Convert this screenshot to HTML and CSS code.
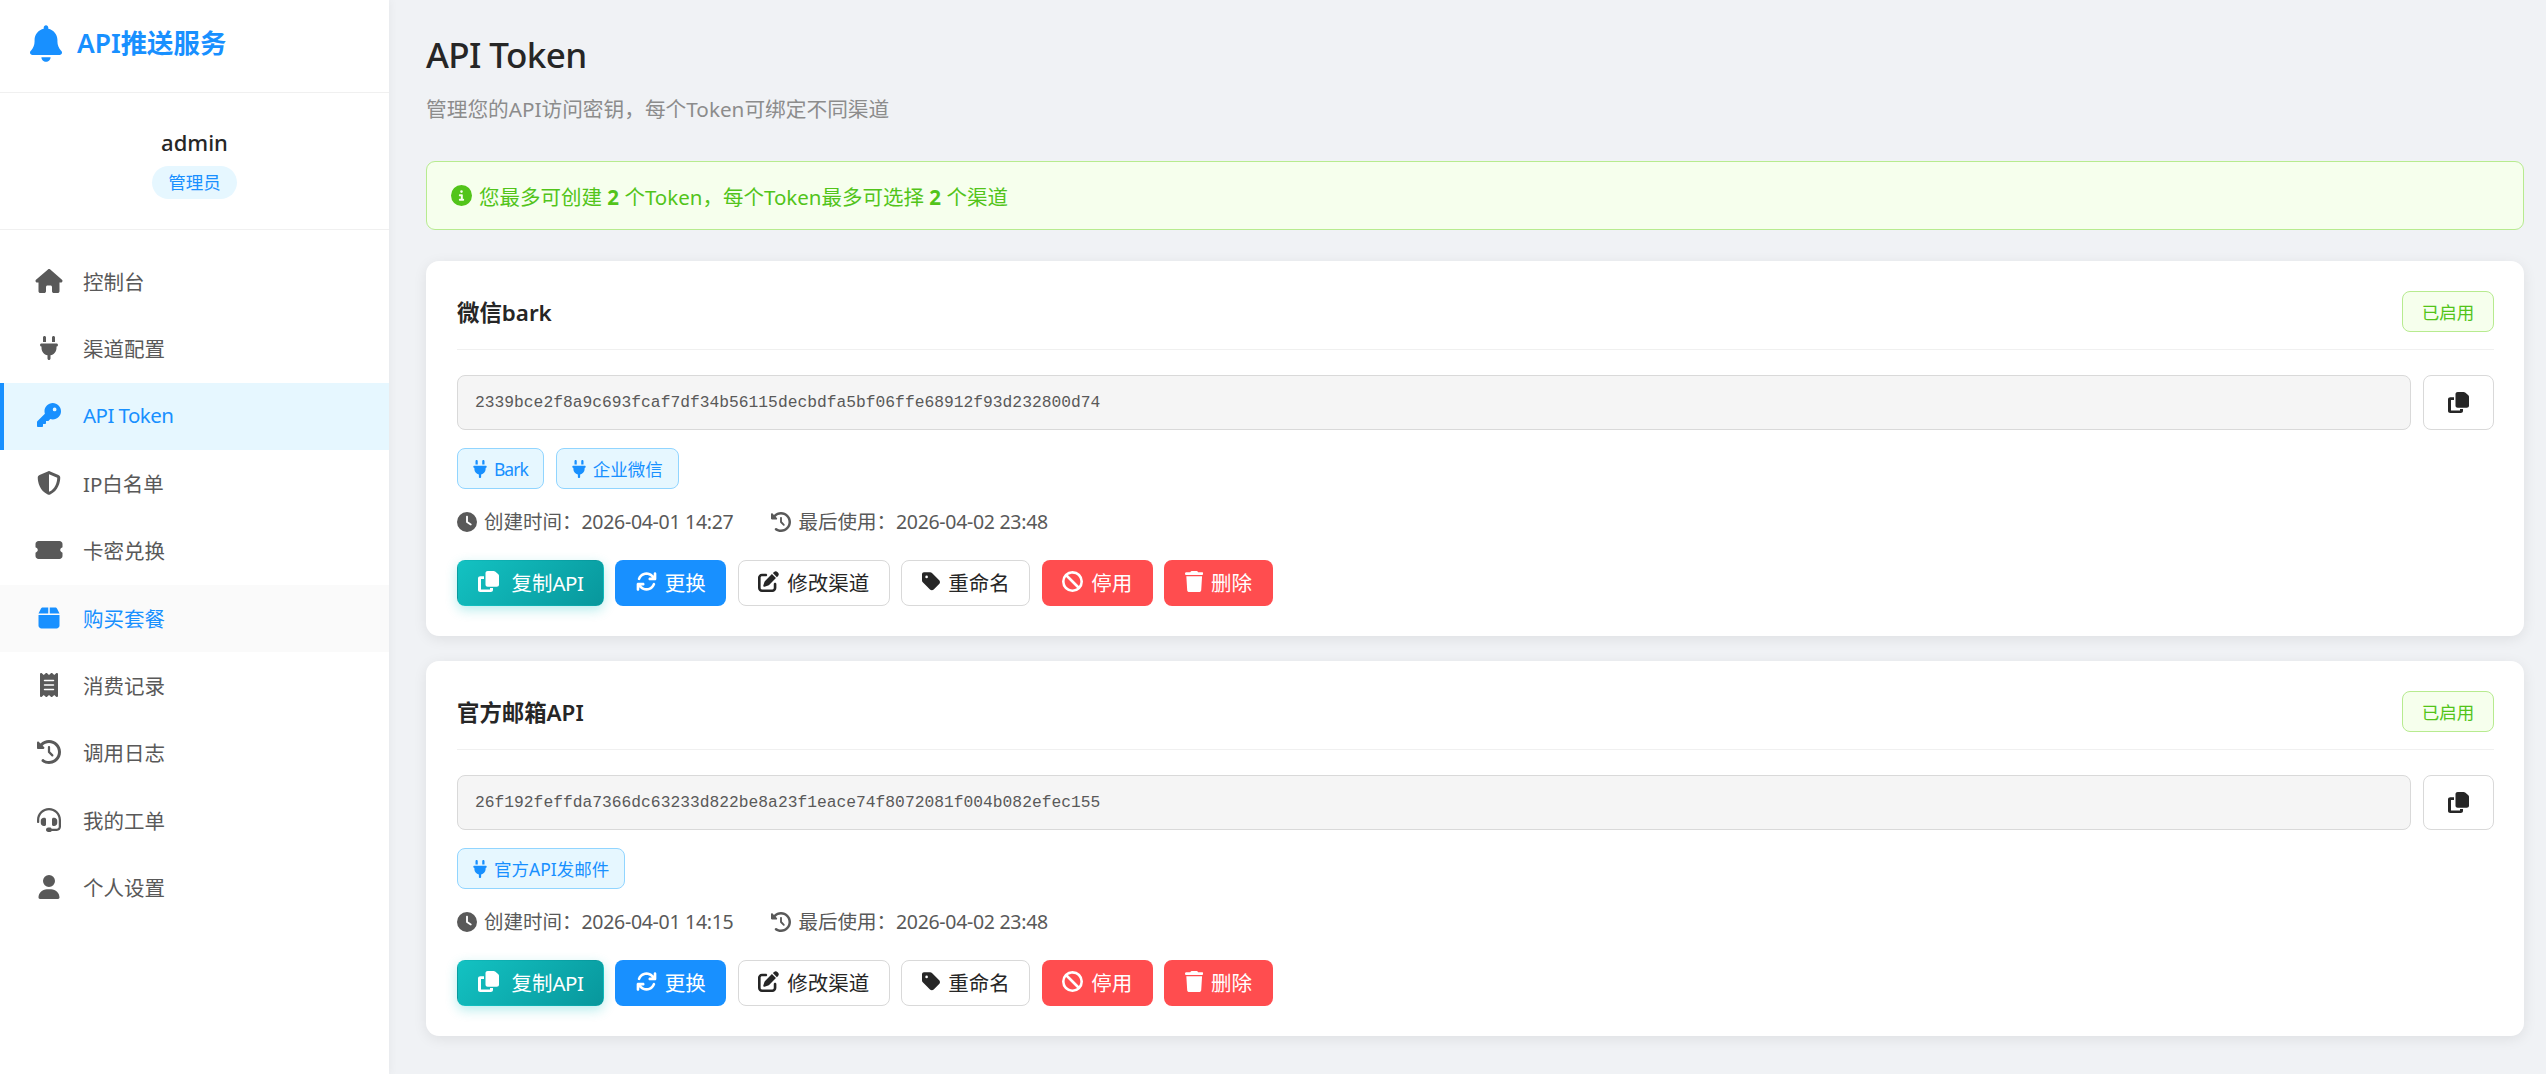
FILE: index.html
```html
<!DOCTYPE html>
<html lang="zh-CN">
<head>
<meta charset="utf-8">
<title>API Token</title>
<link rel="stylesheet" href="styles.css">
</head>
<body>
<svg class="defs" aria-hidden="true">
  <symbol id="i-bell" viewBox="0 0 448 512"><path d="M224 0c-17.7 0-32 14.3-32 32V51.2C119 66 64 130.6 64 208v18.8c0 47-17.3 92.4-48.5 127.6l-7.4 8.3c-8.4 9.4-10.4 22.9-5.3 34.4S19.4 416 32 416H416c12.6 0 24-7.4 29.2-18.9s3.1-25-5.3-34.4l-7.4-8.3C401.3 319.2 384 273.9 384 226.8V208c0-77.4-55-142-128-156.8V32c0-17.7-14.3-32-32-32zm45.3 493.3c12-12 18.7-28.3 18.7-45.3H224 160c0 17 6.7 33.3 18.7 45.3s28.3 18.7 45.3 18.7s33.3-6.7 45.3-18.7z"/></symbol>
  <symbol id="i-home" viewBox="0 0 576 512"><path d="M575.8 255.5c0 18-15 32.1-32 32.1h-32l.7 160.2c0 2.7-.2 5.4-.5 8.1V472c0 22.1-17.9 40-40 40H456c-1.1 0-2.2 0-3.3-.1c-1.4 .1-2.8 .1-4.2 .1H416 392c-22.1 0-40-17.9-40-40V448 384c0-17.7-14.3-32-32-32H256c-17.7 0-32 14.3-32 32v64 24c0 22.1-17.9 40-40 40H160 128.1c-1.5 0-3-.1-4.5-.2c-1.2 .1-2.4 .2-3.6 .2H104c-22.1 0-40-17.9-40-40V360c0-.9 0-1.9 .1-2.8V287.6H32c-18 0-32-14-32-32.1c0-9 3-17 10-24L266.4 8c7-7 15-8 22-8s15 2 21 7L564.8 231.5c8 7 12 15 11 24z"/></symbol>
  <symbol id="i-plug" viewBox="0 0 384 512"><path d="M96 0C78.3 0 64 14.3 64 32v96h64V32c0-17.7-14.3-32-32-32zM288 0c-17.7 0-32 14.3-32 32v96h64V32c0-17.7-14.3-32-32-32zM32 160c-17.7 0-32 14.3-32 32s14.3 32 32 32v32c0 77.4 55 142 128 156.8V480c0 17.7 14.3 32 32 32s32-14.3 32-32V412.8C297 398 352 333.4 352 256V224c17.7 0 32-14.3 32-32s-14.3-32-32-32H32z"/></symbol>
  <symbol id="i-key" viewBox="0 0 512 512"><path d="M336 352c97.2 0 176-78.8 176-176S433.2 0 336 0S160 78.8 160 176c0 18.7 2.9 36.8 8.3 53.7L7 391c-4.5 4.5-7 10.6-7 17v80c0 13.3 10.7 24 24 24h80c13.3 0 24-10.7 24-24V448h40c13.3 0 24-10.7 24-24V384h40c6.4 0 12.5-2.5 17-7l33.3-33.3c16.9 5.4 35 8.3 53.7 8.3zM376 96a40 40 0 1 1 0 80 40 40 0 1 1 0-80z"/></symbol>
  <symbol id="i-shield" viewBox="0 0 512 512"><path d="M256 0c4.6 0 9.2 1 13.4 2.9L457.7 82.8c22 9.3 38.4 31 38.3 57.2c-.5 99.2-41.3 280.7-213.6 363.2c-16.7 8-36.1 8-52.8 0C57.3 420.7 16.5 239.2 16 140c-.1-26.2 16.3-47.9 38.3-57.2L242.7 2.9C246.8 1 251.4 0 256 0zm0 66.8V444.8C394 378 431.1 230.1 432 141.4L256 66.8l0 0z"/></symbol>
  <symbol id="i-ticket" viewBox="0 0 576 512"><path d="M0 128C0 92.7 28.7 64 64 64H512c35.3 0 64 28.7 64 64v64c0 8.8-7.4 15.7-15.7 18.6C541.5 217.1 528 235 528 256s13.5 38.9 32.3 45.4c8.3 2.9 15.7 9.8 15.7 18.6v64c0 35.3-28.7 64-64 64H64c-35.3 0-64-28.7-64-64V320c0-8.8 7.4-15.7 15.7-18.6C34.5 294.9 48 277 48 256s-13.5-38.9-32.3-45.4C7.4 207.7 0 200.8 0 192V128z"/></symbol>
  <symbol id="i-box" viewBox="0 0 448 512"><path d="M50.7 58.5L0 160H208V32H93.7C75.5 32 58.9 42.3 50.7 58.5zM240 160H448L397.3 58.5C389.1 42.3 372.5 32 354.3 32H240V160zm208 32H0V416c0 35.3 28.7 64 64 64H384c35.3 0 64-28.7 64-64V192z"/></symbol>
  <symbol id="i-receipt" viewBox="0 0 384 512"><path d="M14 2.2C22.5-1.7 32.5-.3 39.6 5.8L80 40.4 120.4 5.8c9-7.7 22.3-7.7 31.2 0L192 40.4 232.4 5.8c9-7.7 22.3-7.7 31.2 0L304 40.4 344.4 5.8c7.1-6.1 17.1-7.5 25.6-3.6s14 12.4 14 21.8V488c0 9.4-5.5 17.9-14 21.8s-18.5 2.5-25.6-3.6L304 471.6l-40.4 34.6c-9 7.7-22.3 7.7-31.2 0L192 471.6l-40.4 34.6c-9 7.7-22.3 7.7-31.2 0L80 471.6 39.6 506.2c-7.1 6.1-17.1 7.5-25.6 3.6S0 497.4 0 488V24C0 14.6 5.5 6.1 14 2.2zM96 144c-8.8 0-16 7.2-16 16s7.2 16 16 16H288c8.8 0 16-7.2 16-16s-7.2-16-16-16H96zM80 352c0 8.8 7.2 16 16 16H288c8.8 0 16-7.2 16-16s-7.2-16-16-16H96c-8.8 0-16 7.2-16 16zM96 240c-8.8 0-16 7.2-16 16s7.2 16 16 16H288c8.8 0 16-7.2 16-16s-7.2-16-16-16H96z"/></symbol>
  <symbol id="i-history" viewBox="0 0 512 512"><path d="M75 75L41 41C25.9 25.9 0 36.6 0 57.9V168c0 13.3 10.7 24 24 24H134.1c21.4 0 32.1-25.9 17-41l-30.8-30.8C155 85.5 203 64 256 64c106 0 192 86 192 192s-86 192-192 192c-40.8 0-78.6-12.7-109.7-34.4c-14.5-10.1-34.4-6.6-44.6 7.9s-6.6 34.4 7.9 44.6C151.2 495 201.7 512 256 512c141.4 0 256-114.6 256-256S397.4 0 256 0C185.3 0 121.3 28.7 75 75zm181 53c-13.3 0-24 10.7-24 24V256c0 6.4 2.5 12.5 7 17l72 72c9.4 9.4 24.6 9.4 33.9 0s9.4-24.6 0-33.9l-65-65V152c0-13.3-10.7-24-24-24z"/></symbol>
  <symbol id="i-headset" viewBox="0 0 512 512"><path d="M256 48C141.1 48 48 141.1 48 256v40c0 13.3-10.7 24-24 24s-24-10.7-24-24V256C0 114.6 114.6 0 256 0S512 114.6 512 256V400.1c0 48.6-39.4 88-88.1 88L313.6 488c-8.3 14.3-23.8 24-41.6 24H240c-26.5 0-48-21.5-48-48s21.5-48 48-48h32c17.8 0 33.3 9.7 41.6 24l110.4 .1c22.1 0 40-17.9 40-40V256c0-114.9-93.1-208-208-208zM144 208h16c17.7 0 32 14.3 32 32V352c0 17.7-14.3 32-32 32H144c-35.3 0-64-28.7-64-64V272c0-35.3 28.7-64 64-64zm224 0c35.3 0 64 28.7 64 64v48c0 35.3-28.7 64-64 64H352c-17.7 0-32-14.3-32-32V240c0-17.7 14.3-32 32-32h16z"/></symbol>
  <symbol id="i-user" viewBox="0 0 448 512"><path d="M224 256A128 128 0 1 0 224 0a128 128 0 1 0 0 256zm-45.7 48C79.8 304 0 383.8 0 482.3C0 498.7 13.3 512 29.7 512H418.3c16.4 0 29.7-13.3 29.7-29.7C448 383.8 368.2 304 269.7 304H178.3z"/></symbol>
  <symbol id="i-info" viewBox="0 0 512 512"><path d="M256 512A256 256 0 1 0 256 0a256 256 0 1 0 0 512zM216 336h24V272H216c-13.3 0-24-10.7-24-24s10.7-24 24-24h48c13.3 0 24 10.7 24 24v88h8c13.3 0 24 10.7 24 24s-10.7 24-24 24H216c-13.3 0-24-10.7-24-24s10.7-24 24-24zm40-208a32 32 0 1 1 0 64 32 32 0 1 1 0-64z"/></symbol>
  <symbol id="i-clock" viewBox="0 0 512 512"><path d="M256 0a256 256 0 1 1 0 512A256 256 0 1 1 256 0zM232 120V256c0 8 4 15.5 10.7 20l96 64c11 7.4 25.9 4.4 33.3-6.7s4.4-25.9-6.7-33.3L280 243.2V120c0-13.3-10.7-24-24-24s-24 10.7-24 24z"/></symbol>
  <symbol id="i-copy" viewBox="0 0 448 512" preserveAspectRatio="none"><path d="M208 0H332.1c12.7 0 24.9 5.1 33.9 14.1l67.9 67.9c9 9 14.1 21.2 14.1 33.9V336c0 26.5-21.5 48-48 48H208c-26.5 0-48-21.5-48-48V48c0-26.5 21.5-48 48-48zM48 128h80v64H64V448H256V416h64v48c0 26.5-21.5 48-48 48H48c-26.5 0-48-21.5-48-48V176c0-26.5 21.5-48 48-48z"/></symbol>
  <symbol id="i-sync" viewBox="0 0 512 512"><path d="M105.1 202.6c7.7-21.8 20.2-42.3 37.8-59.8c62.5-62.5 163.8-62.5 226.3 0L386.3 160H336c-17.7 0-32 14.3-32 32s14.3 32 32 32H463.5c0 0 0 0 0 0h.4c17.7 0 32-14.3 32-32V64c0-17.7-14.3-32-32-32s-32 14.3-32 32v51.2L414.4 97.6c-87.5-87.5-229.3-87.5-316.8 0C73.2 122 55.6 150.7 44.8 181.4c-5.9 16.7 2.9 34.9 19.5 40.8s34.9-2.9 40.8-19.5zM39 289.3c-5 1.5-9.8 4.2-13.7 8.2c-4 4-6.7 8.8-8.1 14c-.3 1.2-.6 2.5-.8 3.8c-.3 1.7-.4 3.4-.4 5.1V448c0 17.7 14.3 32 32 32s32-14.3 32-32V396.9l17.6 17.5 0 0c87.5 87.4 229.3 87.4 316.7 0c24.4-24.4 42.1-53.1 52.9-83.7c5.9-16.7-2.9-34.9-19.5-40.8s-34.9 2.9-40.8 19.5c-7.7 21.8-20.2 42.3-37.8 59.8c-62.5 62.5-163.8 62.5-226.3 0l-.1-.1L125.6 352H176c17.7 0 32-14.3 32-32s-14.3-32-32-32H48.4c-1.6 0-3.2 .1-4.8 .3s-3.1 .5-4.6 1z"/></symbol>
  <symbol id="i-edit" viewBox="0 0 512 512"><path d="M471.6 21.7c-21.9-21.9-57.3-21.9-79.2 0L362.3 51.7l97.9 97.9 30.1-30.1c21.9-21.9 21.9-57.3 0-79.2L471.6 21.7zm-299.2 220c-6.1 6.1-10.8 13.6-13.5 21.9l-29.6 88.8c-2.9 8.6-.6 18.1 5.8 24.6s15.9 8.7 24.6 5.8l88.8-29.6c8.2-2.7 15.7-7.4 21.9-13.5L437.7 172.3 339.7 74.3 172.4 241.7zM96 64C43 64 0 107 0 160V416c0 53 43 96 96 96H352c53 0 96-43 96-96V320c0-17.7-14.3-32-32-32s-32 14.3-32 32v96c0 17.7-14.3 32-32 32H96c-17.7 0-32-14.3-32-32V160c0-17.7 14.3-32 32-32h96c17.7 0 32-14.3 32-32s-14.3-32-32-32H96z"/></symbol>
  <symbol id="i-tag" viewBox="0 0 448 512"><path d="M0 80V229.5c0 17 6.7 33.3 18.7 45.3l176 176c25 25 65.5 25 90.5 0L418.7 317.3c25-25 25-65.5 0-90.5l-176-176c-12-12-28.3-18.7-45.3-18.7H48C21.5 32 0 53.5 0 80zm112 32a32 32 0 1 1 0 64 32 32 0 1 1 0-64z"/></symbol>
  <symbol id="i-ban" viewBox="0 0 512 512"><path d="M367.2 412.5L99.5 144.8C77.1 176.1 64 214.5 64 256c0 106 86 192 192 192c41.5 0 79.9-13.1 111.2-35.5zm45.3-45.3C434.9 335.9 448 297.5 448 256c0-106-86-192-192-192c-41.5 0-79.9 13.1-111.2 35.5L412.5 367.2zM0 256a256 256 0 1 1 512 0A256 256 0 1 1 0 256z"/></symbol>
  <symbol id="i-trash" viewBox="0 0 448 512"><path d="M135.2 17.7L128 32H32C14.3 32 0 46.3 0 64S14.3 96 32 96H416c17.7 0 32-14.3 32-32s-14.3-32-32-32H320l-7.2-14.3C307.4 6.8 296.3 0 284.2 0H163.8c-12.1 0-23.2 6.8-28.6 17.7zM416 128H32L53.2 467c1.6 25.3 22.6 45 47.9 45H346.9c25.3 0 46.3-19.7 47.9-45L416 128z"/></symbol>
</svg>

<div class="app">
  <aside class="sidebar">
    <div class="brand">
      <svg class="brand-icon"><use href="#i-bell"/></svg>
      <span class="brand-name">API推送服务</span>
    </div>
    <div class="user">
      <div class="user-name">admin</div>
      <span class="user-role">管理员</span>
    </div>
    <nav class="nav">
      <a class="nav-item"><svg class="nav-icon"><use href="#i-home"/></svg><span>控制台</span></a>
      <a class="nav-item"><svg class="nav-icon"><use href="#i-plug"/></svg><span>渠道配置</span></a>
      <a class="nav-item is-active"><svg class="nav-icon"><use href="#i-key"/></svg><span class="lat">API Token</span></a>
      <a class="nav-item"><svg class="nav-icon"><use href="#i-shield"/></svg><span>IP白名单</span></a>
      <a class="nav-item"><svg class="nav-icon"><use href="#i-ticket"/></svg><span>卡密兑换</span></a>
      <a class="nav-item is-hover"><svg class="nav-icon"><use href="#i-box"/></svg><span>购买套餐</span></a>
      <a class="nav-item"><svg class="nav-icon"><use href="#i-receipt"/></svg><span>消费记录</span></a>
      <a class="nav-item"><svg class="nav-icon"><use href="#i-history"/></svg><span>调用日志</span></a>
      <a class="nav-item"><svg class="nav-icon"><use href="#i-headset"/></svg><span>我的工单</span></a>
      <a class="nav-item"><svg class="nav-icon"><use href="#i-user"/></svg><span>个人设置</span></a>
    </nav>
  </aside>

  <main class="main">
    <h1 class="page-title">API Token</h1>
    <p class="page-sub">管理您的API访问密钥，每个Token可绑定不同渠道</p>

    <div class="alert">
      <svg class="alert-icon"><use href="#i-info"/></svg>
      <span>您最多可创建 <strong>2</strong> 个Token，每个Token最多可选择 <strong>2</strong> 个渠道</span>
    </div>

    <section class="card">
      <header class="card-head">
        <h2 class="card-title">微信bark</h2>
        <span class="status">已启用</span>
      </header>
      <div class="token-row">
        <div class="token">2339bce2f8a9c693fcaf7df34b56115decbdfa5bf06ffe68912f93d232800d74</div>
        <button class="copy-btn"><svg class="btn-icon"><use href="#i-copy"/></svg></button>
      </div>
      <div class="tags">
        <span class="tag"><svg class="tag-icon"><use href="#i-plug"/></svg><span class="lat">Bark</span></span>
        <span class="tag"><svg class="tag-icon"><use href="#i-plug"/></svg>企业微信</span>
      </div>
      <div class="meta">
        <span class="meta-item"><svg class="meta-icon"><use href="#i-clock"/></svg><span>创建时间：<span class="date">2026-04-01 14:27</span></span></span>
        <span class="meta-item"><svg class="meta-icon"><use href="#i-history"/></svg><span>最后使用：<span class="date">2026-04-02 23:48</span></span></span>
      </div>
      <div class="actions">
        <button class="btn btn-teal"><svg class="btn-icon"><use href="#i-copy"/></svg><span>复制<span class="lat">API</span></span></button>
        <button class="btn btn-blue"><svg class="btn-icon"><use href="#i-sync"/></svg>更换</button>
        <button class="btn btn-plain"><svg class="btn-icon"><use href="#i-edit"/></svg>修改渠道</button>
        <button class="btn btn-plain"><svg class="btn-icon btn-icon-narrow"><use href="#i-tag"/></svg>重命名</button>
        <button class="btn btn-red"><svg class="btn-icon"><use href="#i-ban"/></svg>停用</button>
        <button class="btn btn-red"><svg class="btn-icon btn-icon-narrow"><use href="#i-trash"/></svg>删除</button>
      </div>
    </section>

    <section class="card">
      <header class="card-head">
        <h2 class="card-title">官方邮箱API</h2>
        <span class="status">已启用</span>
      </header>
      <div class="token-row">
        <div class="token">26f192feffda7366dc63233d822be8a23f1eace74f8072081f004b082efec155</div>
        <button class="copy-btn"><svg class="btn-icon"><use href="#i-copy"/></svg></button>
      </div>
      <div class="tags">
        <span class="tag"><svg class="tag-icon"><use href="#i-plug"/></svg>官方API发邮件</span>
      </div>
      <div class="meta">
        <span class="meta-item"><svg class="meta-icon"><use href="#i-clock"/></svg><span>创建时间：<span class="date">2026-04-01 14:15</span></span></span>
        <span class="meta-item"><svg class="meta-icon"><use href="#i-history"/></svg><span>最后使用：<span class="date">2026-04-02 23:48</span></span></span>
      </div>
      <div class="actions">
        <button class="btn btn-teal"><svg class="btn-icon"><use href="#i-copy"/></svg><span>复制<span class="lat">API</span></span></button>
        <button class="btn btn-blue"><svg class="btn-icon"><use href="#i-sync"/></svg>更换</button>
        <button class="btn btn-plain"><svg class="btn-icon"><use href="#i-edit"/></svg>修改渠道</button>
        <button class="btn btn-plain"><svg class="btn-icon btn-icon-narrow"><use href="#i-tag"/></svg>重命名</button>
        <button class="btn btn-red"><svg class="btn-icon"><use href="#i-ban"/></svg>停用</button>
        <button class="btn btn-red"><svg class="btn-icon btn-icon-narrow"><use href="#i-trash"/></svg>删除</button>
      </div>
    </section>
  </main>
</div>
</body>
</html>
```

FILE: styles.css
```css
* { box-sizing: border-box; }
html, body { margin: 0; padding: 0; height: 100%; }
body {
  background: #f0f2f5;
  color: #262626;
  font-family: "Noto Sans", "Noto Sans CJK SC", sans-serif;
  font-size: 20.5px;
  overflow: hidden;
}
svg { fill: currentColor; display: block; flex: none; }
.defs { position: absolute; width: 0; height: 0; }
.lat { letter-spacing: -.55px; }

.app { display: flex; height: 1074px; overflow: hidden; }

/* Sidebar */
.sidebar {
  width: 389px;
  flex: none;
  background: #fff;
  box-shadow: 2px 0 8px rgba(0, 0, 0, .04);
}
.brand {
  height: 93px;
  display: flex;
  align-items: center;
  gap: 15px;
  padding: 0 0 6px 30px;
  border-bottom: 1px solid #f0f0f0;
  color: #1890ff;
}
.brand-icon { width: 32px; height: 37px; }
.brand-name { font-size: 26.4px; font-weight: 600; line-height: 36px; }

.user {
  height: 137px;
  padding-top: 34px;
  display: flex;
  flex-direction: column;
  align-items: center;
  border-bottom: 1px solid #f0f0f0;
}
.user-name { font-size: 22px; font-weight: 500; line-height: 30px; color: #262626; }
.user-role {
  margin-top: 9px;
  height: 33px;
  padding: 0 16px;
  border-radius: 17px;
  background: #e6f7ff;
  color: #1890ff;
  font-size: 17.5px;
  line-height: 33px;
}

.nav { padding-top: 18px; }
.nav-item {
  height: 67.4px;
  display: flex;
  align-items: center;
  gap: 20px;
  padding: 0 0 2px 31px;
  border-left: 4px solid transparent;
  color: #595959;
  font-size: 20.5px;
}
.nav-icon { width: 28px; height: 24px; }
.nav-item.is-active { background: #e6f7ff; border-left-color: #1890ff; color: #1890ff; }
.nav-item.is-hover { background: #fafafa; color: #1890ff; }

/* Main */
.main { flex: 1; min-width: 0; padding: 30px 22px 0 37px; }
.page-title { margin: 0; font-size: 35px; font-weight: 500; line-height: 50px; letter-spacing: -.6px; color: #262626; }
.page-sub { margin: 15px 0 0; font-size: 20.7px; line-height: 28px; color: #8c8c8c; }

.alert {
  margin-top: 38px;
  height: 69px;
  display: flex;
  align-items: center;
  gap: 7px;
  padding: 0 24px;
  border: 1px solid #b7eb8f;
  border-radius: 9px;
  background: #f6ffed;
  color: #52c41a;
  font-size: 20.5px;
}
.alert-icon { width: 21px; height: 21px; }
.alert strong { font-weight: 700; }

.card {
  margin-top: 30.5px;
  padding: 30px 30px 30.5px 31px;
  background: #fff;
  border-radius: 13px;
  box-shadow: 0 3px 14px rgba(0, 0, 0, .08);
}
.card + .card { margin-top: 24.5px; }
.card-head {
  display: flex;
  align-items: center;
  justify-content: space-between;
  padding-bottom: 17.5px;
  margin-bottom: 24.5px;
  border-bottom: 1px solid #f0f0f0;
}
.card-title { margin: 0; padding-top: 2px; font-size: 22.4px; font-weight: 600; line-height: 39px; color: #262626; }
.status {
  width: 92px;
  height: 41px;
  display: flex;
  align-items: center;
  justify-content: center;
  border: 1px solid #b7eb8f;
  border-radius: 8px;
  background: #f6ffed;
  color: #52c41a;
  font-size: 17.5px;
}

.token-row { display: flex; gap: 12px; margin-bottom: 18px; }
.token {
  flex: 1;
  height: 55.5px;
  padding: 0 17px;
  display: flex;
  align-items: center;
  background: #f5f5f5;
  border: 1px solid #d9d9d9;
  border-radius: 8px;
  color: #595959;
  font-family: "Liberation Mono", "Courier New", monospace;
  font-size: 16.3px;
}
.copy-btn {
  width: 71px;
  display: flex;
  align-items: center;
  justify-content: center;
  padding: 0;
  background: #fff;
  border: 1px solid #d9d9d9;
  border-radius: 8px;
  color: #262626;
}

.tags { display: flex; gap: 12px; }
.tag {
  height: 41px;
  display: flex;
  align-items: center;
  gap: 7px;
  padding: 0 15px;
  border: 1px solid #91d5ff;
  border-radius: 8px;
  background: #e6f7ff;
  color: #1890ff;
  font-size: 17.5px;
}
.tag .lat { letter-spacing: -1px; }
.tag-icon { width: 14px; height: 18px; }

.meta { display: flex; gap: 38px; margin: 18.5px 0 24px; color: #595959; font-size: 19.5px; line-height: 28px; }
.meta-item { display: flex; align-items: center; gap: 7px; }
.meta-icon { width: 20px; height: 20px; }
.date { letter-spacing: -.3px; }

.actions { display: flex; gap: 11.5px; }
.btn {
  height: 46px;
  display: flex;
  align-items: center;
  gap: 8px;
  padding: 0 19.5px 2px;
  border: 1px solid transparent;
  border-radius: 8px;
  font-family: inherit;
  font-size: 20.5px;
  color: #fff;
}
.btn-icon { width: 21px; height: 21px; }
.btn-icon-narrow { width: 18.4px; }
.btn-teal {
  gap: 13px;
  background: linear-gradient(135deg, #13c2c2, #08979c);
  box-shadow: 0 4px 12px rgba(19, 194, 194, .3);
}
.btn-blue { background: #1890ff; }
.btn-plain { background: #fff; border-color: #d9d9d9; color: #262626; }
.btn-red { background: #ff4d4f; }
```
